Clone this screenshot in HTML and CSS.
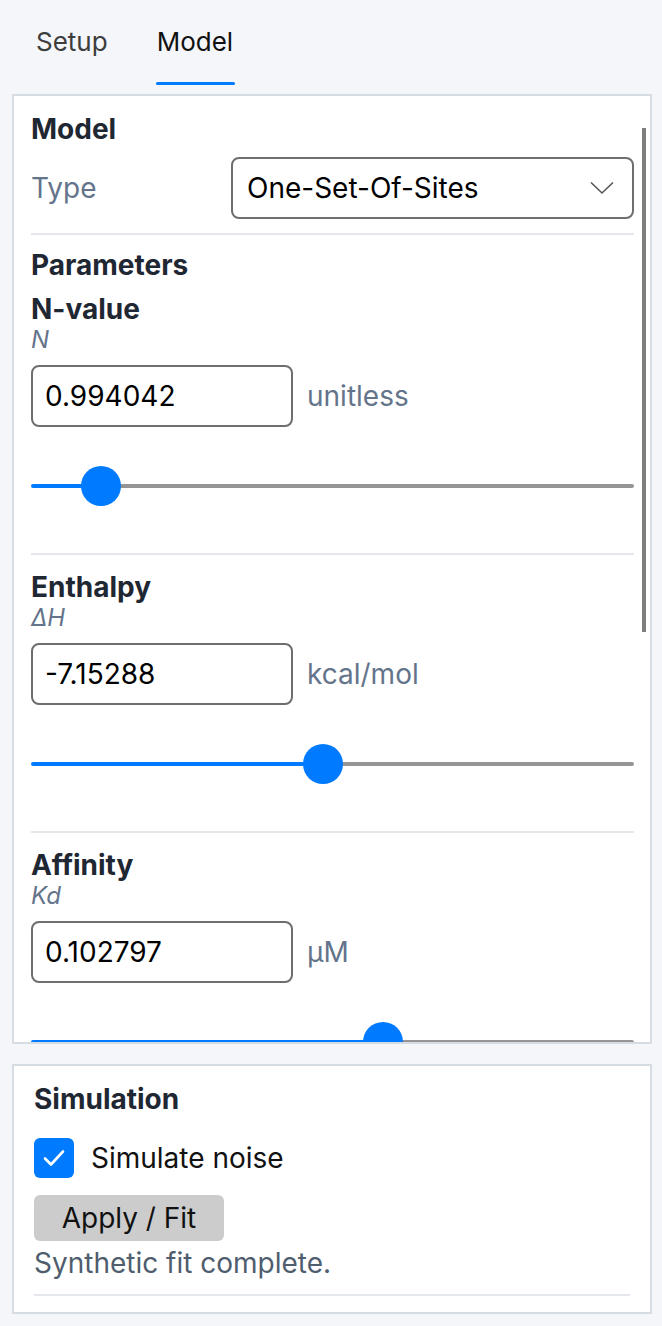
FILE: index.html
```html
<!DOCTYPE html>
<html>
<head>
	<meta charset="utf-8">
	<title>Model</title>
	<link rel="stylesheet" href="styles.css">
</head>
<body>
	<div class="tabs">
		<span class="tab">Setup</span>
		<span class="tab active">Model</span>
	</div>

	<div class="panel modelPanel">
		<div class="scrollThumb"></div>
		<div class="panelBody">
			<h3 class="sectionTitle">Model</h3>
			<div class="typeRow">
				<span class="fieldLabel">Type</span>
				<div class="select">
					<span>One-Set-Of-Sites</span>
					<svg class="chevron" width="24" height="14" viewBox="0 0 24 14">
						<path d="M1 1.5 L12 12 L23 1.5" fill="none" stroke="#555" stroke-width="1.6"/>
					</svg>
				</div>
			</div>
			<hr class="divider">

			<h3 class="sectionTitle paramsTitle">Parameters</h3>
			<div class="param">
				<div class="paramName">N-value</div>
				<div class="paramSymbol">N</div>
				<div class="valueRow">
					<input class="valueInput" type="text" value="0.994042">
					<span class="unit">unitless</span>
				</div>
				<input class="slider" type="range" min="0" max="1" step="0.001" value="0.089" style="--fill: 0.089">
			</div>
			<hr class="divider">

			<div class="param">
				<div class="paramName">Enthalpy</div>
				<div class="paramSymbol">ΔH</div>
				<div class="valueRow">
					<input class="valueInput" type="text" value="-7.15288">
					<span class="unit">kcal/mol</span>
				</div>
				<input class="slider" type="range" min="0" max="1" step="0.001" value="0.483" style="--fill: 0.483">
			</div>
			<hr class="divider">

			<div class="param">
				<div class="paramName">Affinity</div>
				<div class="paramSymbol">Kd</div>
				<div class="valueRow">
					<input class="valueInput" type="text" value="0.102797">
					<span class="unit">μM</span>
				</div>
				<input class="slider" type="range" min="0" max="1" step="0.001" value="0.59" style="--fill: 0.59">
			</div>
		</div>
	</div>

	<div class="panel simPanel">
		<h3 class="sectionTitle">Simulation</h3>
		<label class="checkRow">
			<span class="checkbox">
				<svg width="40" height="40" viewBox="0 0 40 40">
					<path d="M11 20.5 L17 26.5 L29 13.5" fill="none" stroke="#fff" stroke-width="2.6" stroke-linecap="round" stroke-linejoin="round"/>
				</svg>
			</span>
			<span>Simulate noise</span>
		</label>
		<button class="applyBtn">Apply / Fit</button>
		<p class="status">Synthetic fit complete.</p>
		<hr class="divider">
	</div>
</body>
</html>
```

FILE: styles.css
```css
*{
	margin: 0px;
	padding: 0px;
	box-sizing: border-box;
}
body{
	background-color: #f4f6fa;
	font-family: Inter, "Noto Sans", sans-serif;
	color: #111;
	width: 662px;
}
.tabs{
	display: flex;
	gap: 49px;
	padding-left: 36px;
	height: 86px;
}
.tab{
	font-size: 26px;
	line-height: 30px;
	padding-top: 27px;
	color: #3d3d3d;
	height: 86px;
}
.tab.active{
	color: #111;
	position: relative;
}
.tab.active:after{
	content: "";
	position: absolute;
	left: -1px;
	right: -2px;
	bottom: 1px;
	height: 3px;
	border-radius: 2px;
	background-color: #007aff;
}
.panel{
	margin-left: 12px;
	width: 640px;
	background-color: #fff;
	border: 2px solid #d6dce4;
}
.modelPanel{
	margin-top: 8px;
	height: 950px;
	overflow: hidden;
	position: relative;
}
.scrollThumb{
	position: absolute;
	top: 32px;
	right: 4px;
	width: 4px;
	height: 504px;
	background-color: #7f7f7f;
}
.panelBody{
	padding: 16px 16px 0 17px;
}
.sectionTitle{
	font-size: 28px;
	line-height: 34px;
	font-weight: 700;
	color: #1f2733;
}
.typeRow{
	display: grid;
	grid-template-columns: 200px 1fr;
	align-items: center;
	margin-top: 11px;
}
.fieldLabel, .unit{
	font-size: 28px;
	color: #64748b;
}
.select{
	height: 62px;
	border: 2px solid #6e6e6e;
	border-radius: 8px;
	padding: 0 18px 0 14px;
	display: flex;
	align-items: center;
	justify-content: space-between;
	font-size: 28px;
	color: #000;
}
.divider{
	border: none;
	height: 2px;
	background-color: #e4e7ec;
	margin-top: 14px;
}
.paramsTitle{
	margin-top: 13px;
}
.param{
	padding-top: 10px;
}
.divider + .param{
	padding-top: 15px;
}
.paramName{
	font-size: 28px;
	line-height: 34px;
	font-weight: 700;
	color: #1f2733;
}
.paramSymbol{
	font-size: 24px;
	line-height: 28px;
	font-style: italic;
	color: #64748b;
}
.valueRow{
	display: flex;
	align-items: center;
	gap: 14px;
	margin-top: 11px;
}
.valueInput{
	width: 262px;
	height: 62px;
	border: 2px solid #6e6e6e;
	border-radius: 8px;
	padding: 0 12px;
	font-family: Inter, "Noto Sans", sans-serif;
	font-size: 28px;
	color: #000;
	background-color: #fff;
	outline: none;
}
.slider{
	-webkit-appearance: none;
	appearance: none;
	display: block;
	width: 100%;
	height: 40px;
	margin-top: 39px;
	background: transparent;
}
.slider::-webkit-slider-runnable-track{
	height: 4px;
	border-radius: 2px;
	background: linear-gradient(to right, #007aff calc(20px + (100% - 40px) * var(--fill)), #959595 0);
}
.slider::-webkit-slider-thumb{
	-webkit-appearance: none;
	width: 40px;
	height: 40px;
	border-radius: 50%;
	background-color: #007aff;
	border: none;
	margin-top: -18px;
}
.param + .divider{
	margin-top: 47px;
}
.simPanel{
	margin-top: 20px;
	height: 250px;
	padding: 16px 20px 0 20px;
}
.checkRow{
	display: flex;
	align-items: center;
	gap: 17px;
	margin-top: 22px;
	font-size: 28px;
	color: #111;
}
.checkbox{
	width: 40px;
	height: 40px;
	border-radius: 6px;
	background-color: #007aff;
	display: block;
}
.checkbox svg{
	display: block;
}
.applyBtn{
	display: block;
	margin-top: 17px;
	width: 190px;
	height: 46px;
	border: none;
	border-radius: 6px;
	background-color: #cccccc;
	font-family: Inter, "Noto Sans", sans-serif;
	font-size: 28px;
	color: #111;
}
.status{
	margin-top: 5px;
	font-size: 28px;
	line-height: 34px;
	color: #4f5d6e;
}
.simPanel .divider{
	margin-top: 14px;
}
```
